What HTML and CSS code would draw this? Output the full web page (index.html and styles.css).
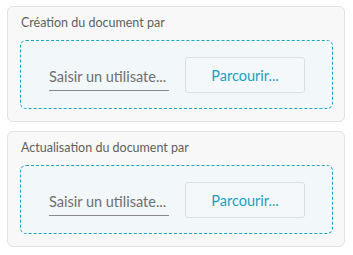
FILE: index.html
```html
<!DOCTYPE html>
<html lang="fr">
<head>
  <meta charset="UTF-8" />
  <meta name="viewport" content="width=device-width, initial-scale=1" />
  <title>Document</title>
  <link rel="stylesheet" href="styles.css">
</head>
<body>
  <div class="card">
    <div class="card-title">Création du document par</div>
    <div class="drop-zone">
      <input class="user-input" type="text" placeholder="Saisir un utilisate...">
      <button class="browse-btn">Parcourir...</button>
    </div>
  </div>

  <div class="card">
    <div class="card-title">Actualisation du document par</div>
    <div class="drop-zone">
      <input class="user-input" type="text" placeholder="Saisir un utilisate...">
      <button class="browse-btn">Parcourir...</button>
    </div>
  </div>
</body>
</html>
```

FILE: styles.css
```css
body {
  margin: 0;
  padding: 6px 8px 0 7px;
  background-color: #fff;
  font-family: Lato, "Open Sans", sans-serif;
  display: flex;
  flex-direction: column;
  gap: 9px;
}
.card {
  width: 338px;
  box-sizing: border-box;
  border: 1px solid #e2e2e2;
  border-radius: 6px;
  background-color: #f8f8f9;
  padding: 8px 11px 12px 12px;
}
.card-title {
  font-size: 12.5px;
  line-height: 16px;
  color: #5f5f5f;
  padding-left: 1px;
  margin-bottom: 9px;
}
.drop-zone {
  height: 69px;
  box-sizing: border-box;
  border: 1px dashed #1aa6c6;
  border-radius: 6px;
  background-color: #f2f7fa;
  display: flex;
  align-items: center;
  padding: 0 0 0 28px;
  gap: 16px;
}
.user-input {
  width: 120px;
  height: 32px;
  box-sizing: border-box;
  margin-top: 1px;
  padding: 4px 0 0 0;
  border: none;
  border-bottom: 1px solid #8a8a8a;
  background: transparent;
  font-family: inherit;
  font-size: 14.5px;
  color: #666;
  outline: none;
}
.user-input::placeholder {
  color: #6e6e6e;
}
.browse-btn {
  width: 120px;
  height: 36px;
  margin-top: 1px;
  border: 1px solid #dcdfe2;
  border-radius: 3px;
  background-color: #f5f8fa;
  font-family: inherit;
  font-size: 14.5px;
  color: #1aa0c0;
  cursor: pointer;
}
```
